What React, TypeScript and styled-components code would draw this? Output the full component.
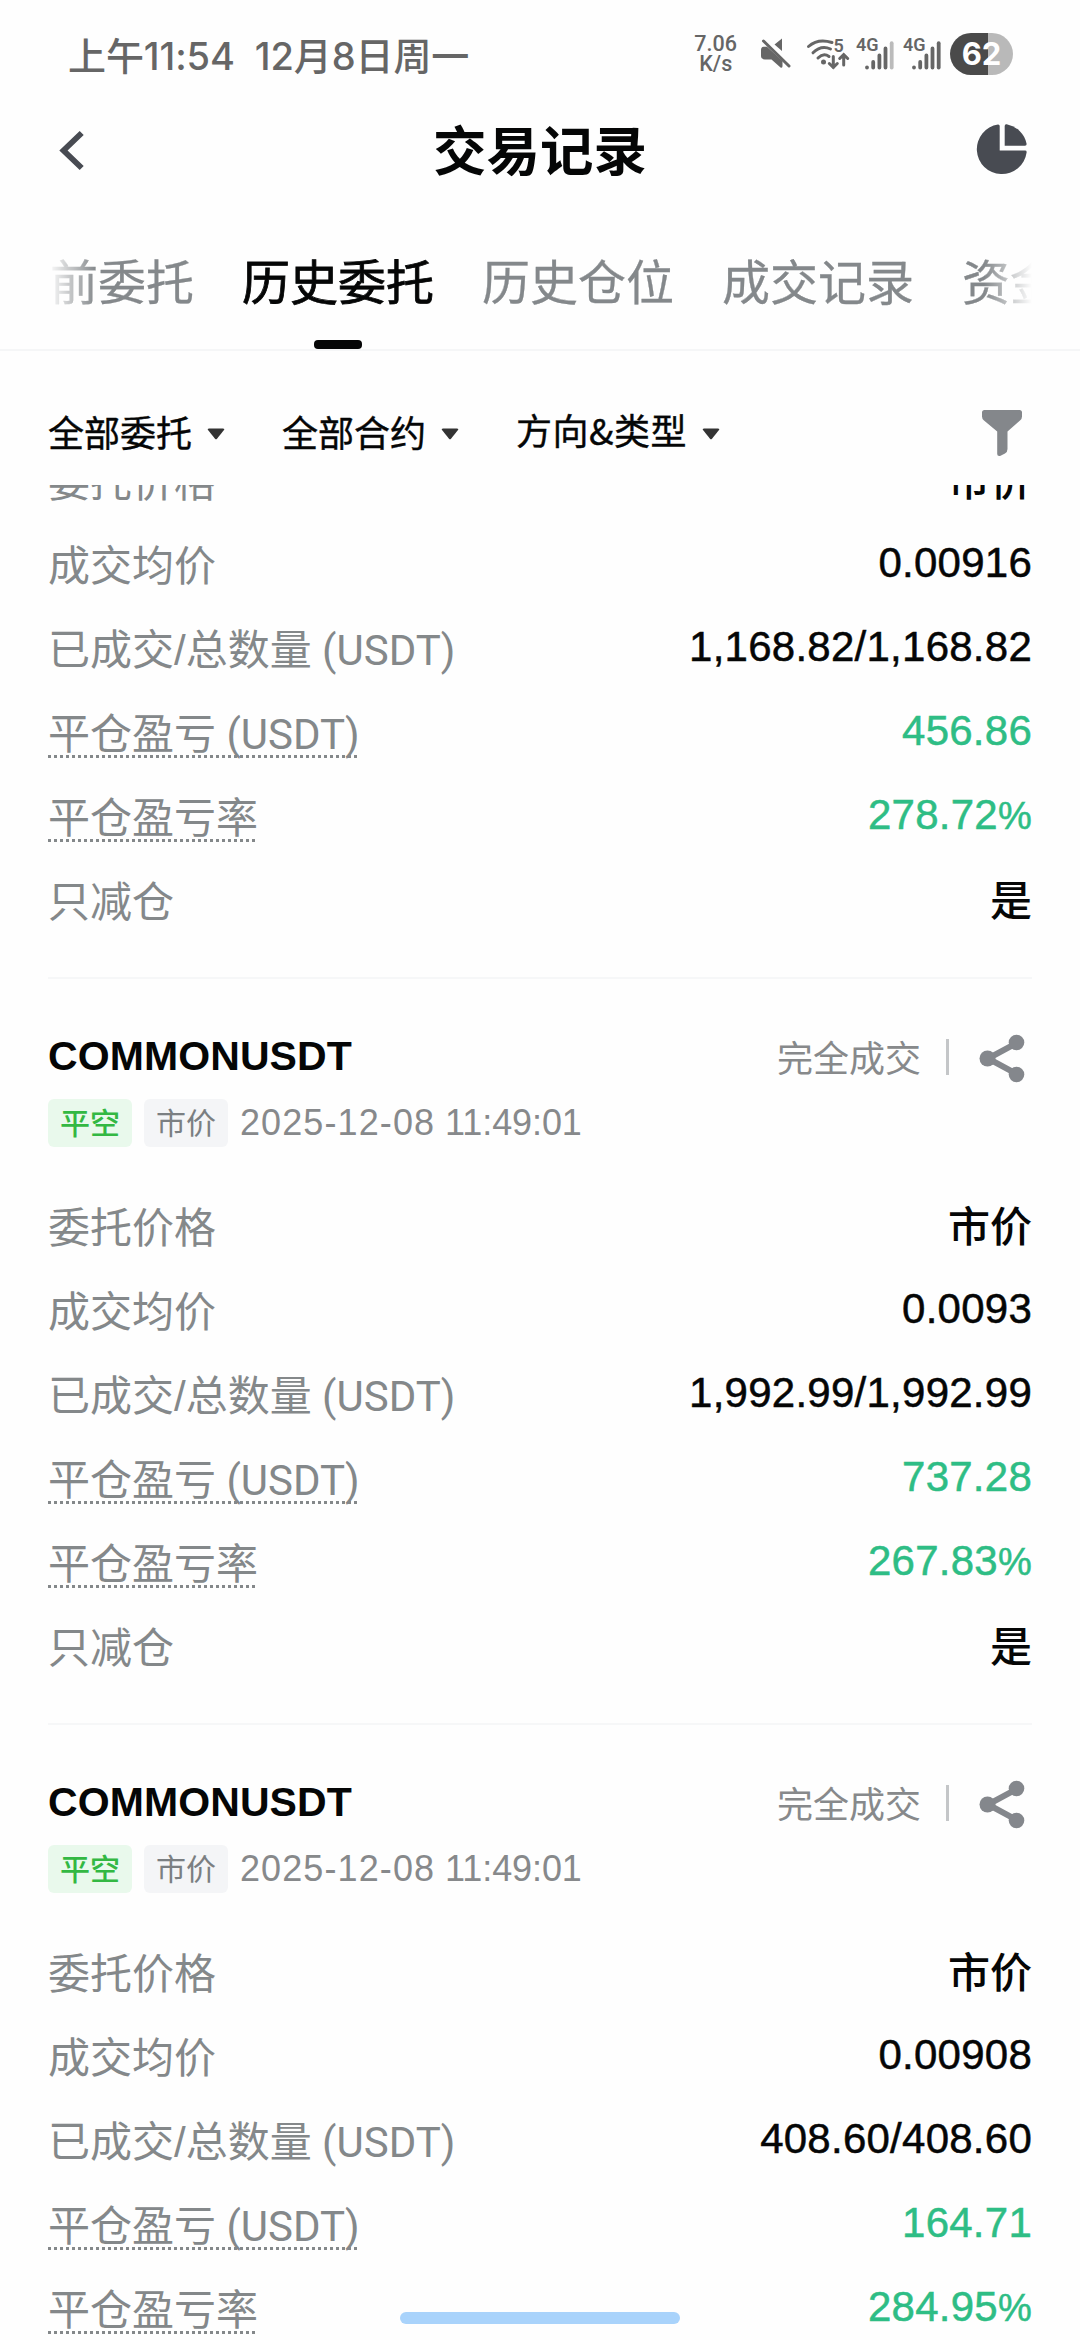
import React from 'react';
import styled, { createGlobalStyle, css } from 'styled-components';

const cjk = `'Noto Sans CJK SC', sans-serif`;

const GlobalStyle = createGlobalStyle`
  * { box-sizing: border-box; }
  html, body { margin: 0; padding: 0; background: #fefefe; }
  body { font-family: 'Liberation Sans', ${cjk}; color: #050606; overflow: hidden; }
`;

const Screen = styled.div`
  position: relative;
  display: flex;
  flex-direction: column;
  width: 1080px;
  height: 2340px;
  overflow: hidden;
  background: #fefefe;
`;

const StatusBar = styled.div`
  display: flex;
  align-items: center;
  justify-content: space-between;
  height: 112px;
  padding: 0 67px 0 68px;
  color: #666;
`;

const Clock = styled.div`
  font: 500 38px/56px Inter, ${cjk};
  white-space: pre;
  letter-spacing: -0.1px;
`;

const StatusIcons = styled.div`
  display: flex;
  align-items: center;
`;

const NetSpeed = styled.div`
  font: 500 21.5px/20px Roboto, sans-serif;
  text-align: center;
  margin-right: 19px;
  padding-bottom: 4px;
`;

const IconStrip = styled.svg`
  display: block;
  width: 186px;
  height: 44px;
  margin-right: 8px;
`;

const Battery = styled.div`
  display: flex;
  align-items: center;
  justify-content: center;
  width: 63px;
  height: 42px;
  margin-bottom: 4px;
  border-radius: 21px;
  background: linear-gradient(90deg, #4a4a4a 61%, #b9b9b9 61%);
  color: #fff;
  font: 700 31px/42px Inter, sans-serif;
`;

const Header = styled.header`
  display: grid;
  grid-template-columns: 64px 1fr 64px;
  align-items: center;
  height: 78px;
  padding: 0 48px;
`;

const Title = styled.h1`
  margin: -6px 0 0;
  font: 700 53.5px/78px ${cjk};
  text-align: center;
`;

const HeaderIcon = styled.svg<{ $end?: boolean }>`
  display: block;
  width: 56px;
  height: 56px;
  justify-self: ${(p) => (p.$end ? 'end' : 'start')};
`;

const TabBar = styled.nav`
  height: 161px;
  padding: 0 48px;
  border-bottom: 2px solid #f5f6f7;
`;

const TabScroller = styled.div`
  display: flex;
  height: 159px;
  overflow: hidden;
  mask-image: linear-gradient(90deg, transparent 0, #000 48px, #000 calc(100% - 48px), transparent 100%);
`;

const TabList = styled.div`
  display: flex;
  flex: none;
  gap: 48px;
  margin-left: -46px;
`;

const Tab = styled.div<{ $active?: boolean }>`
  display: flex;
  flex-direction: column;
  align-items: center;
  justify-content: space-between;
  padding-top: 53px;
  font: 400 48px/72px ${cjk};
  -webkit-text-stroke: ${(p) => (p.$active ? '0.8px' : '0.3px')} currentColor;
  color: ${(p) => (p.$active ? '#050606' : '#84888b')};
  white-space: nowrap;
`;

const Indicator = styled.i`
  width: 48px;
  height: 9px;
  border-radius: 4px;
  background: #050606;
`;

const Filters = styled.div`
  display: flex;
  align-items: center;
  height: 134px;
  padding: 28px 48px 0;
`;

const Filter = styled.div`
  display: flex;
  align-items: center;
  gap: 15px;
  margin-right: 57px;
`;

const FilterText = styled.span<{ $latin?: boolean }>`
  font: 400 36px/54px ${cjk};
  -webkit-text-stroke: 0.4px currentColor;
  letter-spacing: ${(p) => (p.$latin ? '0.5px' : '0')};
  margin-bottom: ${(p) => (p.$latin ? '6px' : '3px')};
`;

const Caret = styled.svg`
  width: 18px;
  height: 12px;
  margin-top: 3px;
`;

const Funnel = styled.svg`
  width: 42px;
  height: 49px;
  margin-left: auto;
  margin-right: 9px;
`;

const OrderList = styled.main`
  flex: 1;
  min-height: 0;
  overflow: hidden;
  padding: 0 48px;
`;

const Order = styled.section<{ $scrolled?: boolean }>`
  height: 745px;
  margin-bottom: 1px;
  border-bottom: 2px solid #f6f7f8;
  ${(p) => p.$scrolled && css`margin-top: -251px;`}
`;

const OrderHead = styled.div`
  display: flex;
  justify-content: space-between;
  height: 205px;
  padding-top: 48px;
`;

const Symbol = styled.div`
  font: 700 41px/56px 'Liberation Sans', sans-serif;
  letter-spacing: 0.1px;
`;

const Meta = styled.div`
  display: flex;
  align-items: center;
  gap: 12px;
  margin-top: 14px;
`;

const Tag = styled.span<{ $green?: boolean }>`
  width: 84px;
  height: 48px;
  border-radius: 6px;
  text-align: center;
  font: ${(p) => (p.$green ? 500 : 400)} 30px/44px ${cjk};
  color: ${(p) => (p.$green ? '#33b843' : '#7b7f82')};
  background: ${(p) => (p.$green ? '#e9f9ec' : '#f4f5f7')};
`;

const Time = styled.span`
  font: 400 36px/50px 'Liberation Sans', sans-serif;
  letter-spacing: -0.1px;
  color: #87898b;
`;

const DatePart = styled.span`
  letter-spacing: 1.1px;
`;

const Status = styled.div`
  display: flex;
  align-items: center;
  height: 56px;
  font: 400 36px/56px ${cjk};
  color: #87898b;
`;

const Separator = styled.i`
  width: 3px;
  height: 36px;
  margin: 2px 30px 0 25px;
  background: #c4c6c8;
`;

const Share = styled.svg`
  width: 50px;
  height: 50px;
  margin: 4px 3px 0 0;
`;

const Row = styled.div`
  display: flex;
  align-items: center;
  justify-content: space-between;
  height: 84px;
`;

const Label = styled.span<{ $dotted?: boolean }>`
  height: 50px;
  font: 400 42px/54px 'Liberation Sans', ${cjk};
  color: #84888a;
  white-space: pre;
  ${(p) =>
    p.$dotted &&
    css`
      background: repeating-linear-gradient(90deg, #84888a 0 3px, transparent 3px 6px) left bottom / 100% 3px no-repeat;
    `}
`;

const Unit = styled.span`
  font-family: Roboto, sans-serif;
`;

const Value = styled.span<{ $green?: boolean }>`
  margin-bottom: 4px;
  font: 400 42px/50px 'Liberation Sans', ${cjk};
  letter-spacing: 0.25px;
  -webkit-text-stroke: 0.5px currentColor;
  color: ${(p) => (p.$green ? '#2ebd85' : '#050606')};
`;

const Percent = styled.span`
  font-size: 38px;
`;

const TextValue = styled.span`
  margin-bottom: 6px;
  font: 500 42px/50px ${cjk};
`;

const HomeBar = styled.div`
  position: absolute;
  left: 400px;
  bottom: 16px;
  width: 280px;
  height: 12px;
  border-radius: 6px;
  background: #a9d3fb;
`;

type OrderData = { avg: string; amount: string; pnl: string; rate: string };

const orders: OrderData[] = [
  { avg: '0.00916', amount: '1,168.82/1,168.82', pnl: '456.86', rate: '278.72' },
  { avg: '0.0093', amount: '1,992.99/1,992.99', pnl: '737.28', rate: '267.83' },
  { avg: '0.00908', amount: '408.60/408.60', pnl: '164.71', rate: '284.95' },
];

const OrderCard = ({ order, scrolled }: { order: OrderData; scrolled?: boolean }) => (
  <Order $scrolled={scrolled}>
    <OrderHead>
      <div>
        <Symbol>COMMONUSDT</Symbol>
        <Meta>
          <Tag $green>平空</Tag>
          <Tag>市价</Tag>
          <Time><DatePart>2025-12-08</DatePart> 11:49:01</Time>
        </Meta>
      </div>
      <Status>
        完全成交
        <Separator />
        <Share viewBox="0 0 50 50" fill="#84878c" stroke="#84878c">
          <path d="M38 10 9 25.500l29 15.500" fill="none" strokeWidth="6" />
          <circle cx="37.500" cy="9.500" r="7.800" stroke="none" />
          <circle cx="8.500" cy="25.500" r="8" stroke="none" />
          <circle cx="37.500" cy="41.500" r="7.800" stroke="none" />
        </Share>
      </Status>
    </OrderHead>
    <Row><Label>委托价格</Label><TextValue>市价</TextValue></Row>
    <Row><Label>成交均价</Label><Value>{order.avg}</Value></Row>
    <Row><Label>已成交/总数量<Unit> (USDT)</Unit></Label><Value>{order.amount}</Value></Row>
    <Row><Label $dotted>平仓盈亏<Unit> (USDT)</Unit></Label><Value $green>{order.pnl}</Value></Row>
    <Row><Label $dotted>平仓盈亏率</Label><Value $green>{order.rate}<Percent>%</Percent></Value></Row>
    <Row><Label>只减仓</Label><TextValue>是</TextValue></Row>
  </Order>
);

const FilterItem = ({ text, latin }: { text: string; latin?: boolean }) => (
  <Filter>
    <FilterText $latin={latin}>{text}</FilterText>
    <Caret viewBox="0 0 18 12"><path d="M2 .5h14q2 0 1 1.500l-7 8.800q-1 1-2 0L1 2Q0 .5 2 .5z" fill="#333" /></Caret>
  </Filter>
);

const Signal = ({ x, last }: { x: number; last: string }) => (
  <g transform={`translate(${x} 0)`} strokeWidth="3.800" strokeLinecap="round" stroke="#666">
    <path d="M2 33.300v.2M8.200 28v5.500M14.400 21.500v12M20.500 14.500v19" />
    <path d="M26.700 9.200v24.300" stroke={last} />
  </g>
);

export default function App() {
  return (
    <Screen>
      <GlobalStyle />
      <StatusBar>
        <Clock>上午11:54  12月8日周一</Clock>
        <StatusIcons>
          <NetSpeed>7.06<br />K/s</NetSpeed>
          <IconStrip viewBox="0 0 186 44" fill="#666">
            <path d="M26 4.500v12.500l-7.500-6.500zM7.500 12.700H11L26.500 27V32q0 2.500-2 1.500L15.500 25.500H9Q5 25 5 22v-6q0-3 2.500-3.300z" />
            <path d="m7.500 7 25.500 25" stroke="#666" strokeWidth="3" strokeLinecap="round" />
            <g fill="none" stroke="#666" strokeWidth="3" strokeLinecap="round">
              <path d="M52.500 12.500Q62 4 76 8.500M57 18.800q8-8 17.500-3.800M62 24q5.500-5.500 11-1.500M77.300 22.500v11m-4-4 4 4 4-4M87.700 31V20.500m-4 4 4-4 4 4" />
            </g>
            <circle cx="67.500" cy="28" r="2.500" />
            <g fontFamily="Roboto, sans-serif" fontWeight="600" fontSize="18">
              <text x="77.500" y="17.500">5</text>
              <text x="100" y="16.700">4G</text>
              <text x="147" y="16.700">4G</text>
            </g>
            <Signal x={109} last="#bbb" />
            <Signal x={156} last="#666" />
          </IconStrip>
          <Battery>62</Battery>
        </StatusIcons>
      </StatusBar>
      <Header>
        <HeaderIcon viewBox="0 0 56 56"><path d="M33.700 10 15.500 27.500l18.200 17.500" fill="none" stroke="#484b52" strokeWidth="5.800" /></HeaderIcon>
        <Title>交易记录</Title>
        <HeaderIcon $end viewBox="0 0 56 56" fill="#484b52">
          <path d="M22 1.400Q23.700 1.300 23.700 3V27.500H49Q51 27.500 50.600 29.500A25 25 0 1 1 22 1.400z" />
          <path d="M28.700 3Q28.700 1 30.700 1.300A25 25 0 0 1 50.600 20.700Q50.800 22.700 49 22.700H28.700z" />
        </HeaderIcon>
      </Header>
      <TabBar>
        <TabScroller>
          <TabList>
            <Tab>当前委托</Tab>
            <Tab $active>历史委托<Indicator /></Tab>
            <Tab>历史仓位</Tab>
            <Tab>成交记录</Tab>
            <Tab>资金流水</Tab>
          </TabList>
        </TabScroller>
      </TabBar>
      <Filters>
        <FilterItem text="全部委托" />
        <FilterItem text="全部合约" />
        <FilterItem text="方向&类型" latin />
        <Funnel viewBox="0 0 42 49" fill="#84878b">
          <path d="M3.500 2H38.500Q41 2 41 4.500V8.500Q41 11 39 12.500L26.500 23.500V41Q26.500 44 24 45.500L19 48Q16.200 48.500 16.200 46V23.500L3 12.500Q1 11 1 8.500V4.500Q1 2 3.500 2z" />
        </Funnel>
      </Filters>
      <OrderList>
        {orders.map((o, i) => <OrderCard key={o.avg} order={o} scrolled={i === 0} />)}
      </OrderList>
      <HomeBar />
    </Screen>
  );
}
